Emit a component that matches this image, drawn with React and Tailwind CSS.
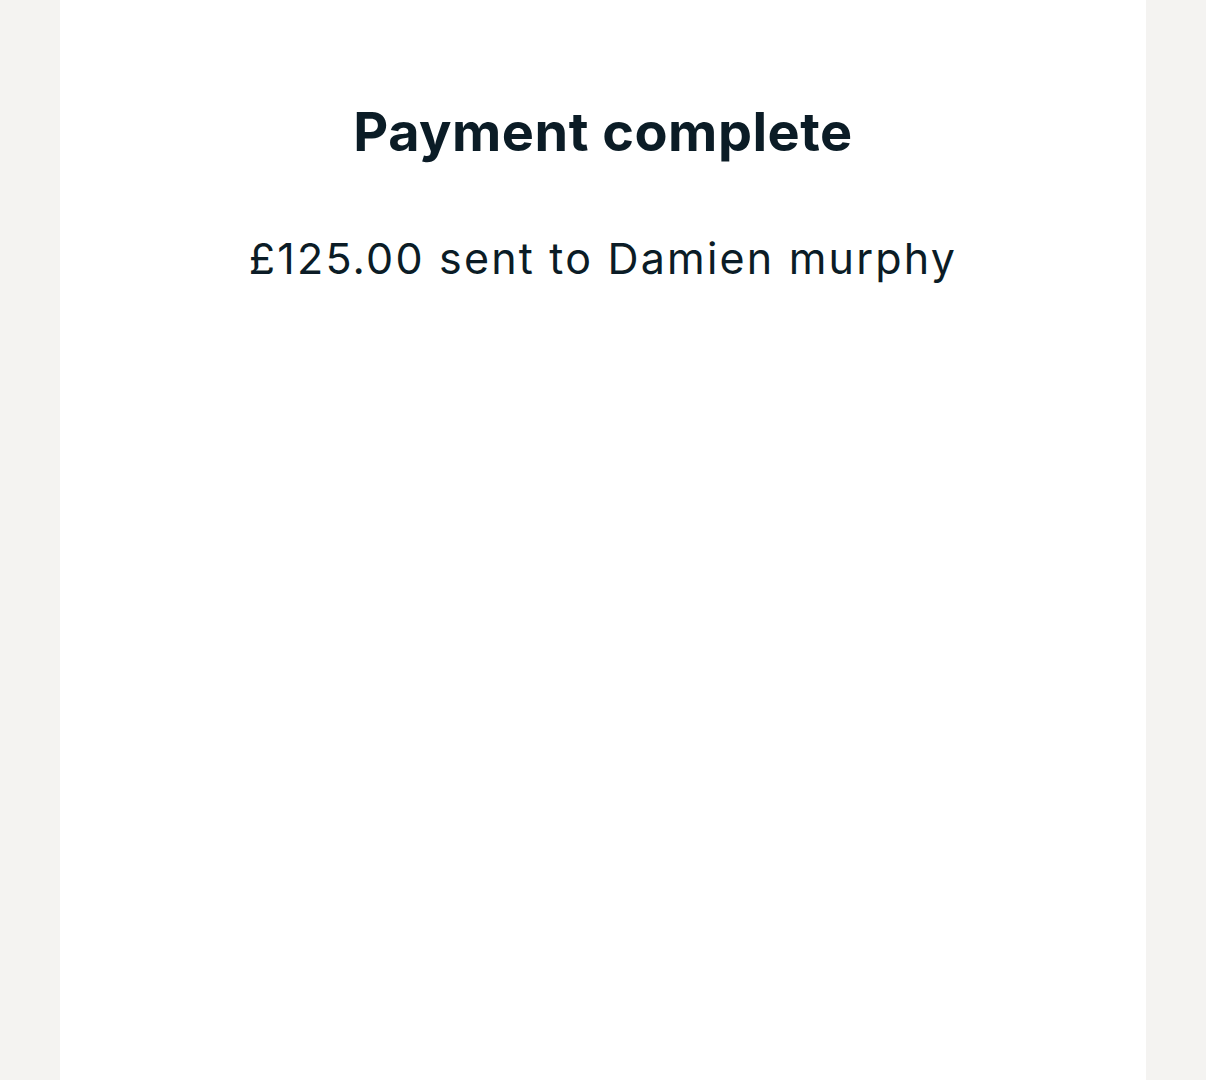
import React from 'react'

const App = () => {
    return (
        <div className="min-h-screen w-full bg-[#f4f3f1] flex justify-center" style={{ fontFamily: 'Inter, "Liberation Sans", sans-serif' }}>
            <div className="w-[1086px] min-h-screen bg-white flex flex-col items-center text-[#0b1c26]">
                <h1 className="mt-[100px] text-[54px] leading-[64px] font-bold tracking-[0.5px]">Payment complete</h1>
                <p className="mt-[69px] text-[43px] leading-[50px] font-normal tracking-[2.2px]">£125.00 sent to Damien murphy</p>
            </div>
        </div>
    )
}

export default App
